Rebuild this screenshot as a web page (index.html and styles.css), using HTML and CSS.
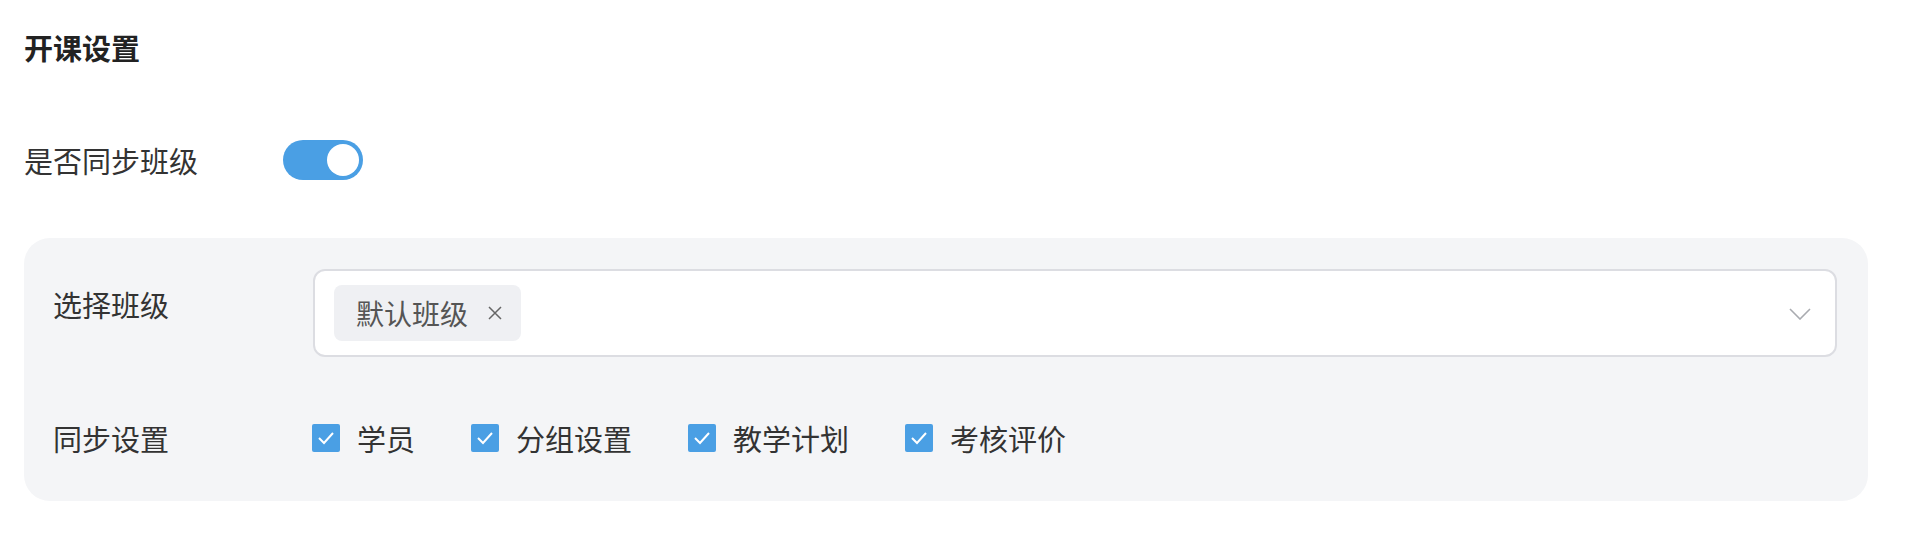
FILE: index.html
```html
<!DOCTYPE html>
<html>
<head>
  <title>开课设置</title>
  <meta charset="UTF-8">
  <link rel="stylesheet" href="styles.css">
</head>
<body>

  <h2 class="section-title">开课设置</h2>

  <div class="form-row switch-row">
    <label class="row-label">是否同步班级</label>
    <div class="switch is-on"><span class="switch-knob"></span></div>
  </div>

  <div class="sync-panel">
    <!-- wybór klasy -->
    <div class="panel-item">
      <label class="panel-label">选择班级</label>
      <div class="select-box">
        <span class="tag">默认班级
          <svg class="tag-close" width="14" height="14" viewBox="0 0 14 14"><path d="M1 1L13 13M13 1L1 13" stroke="#666" stroke-width="1.5" fill="none"/></svg>
        </span>
        <svg class="select-arrow" width="22" height="12" viewBox="0 0 22 12"><path d="M1 1L11 11L21 1" stroke="#A9ABB0" stroke-width="1.6" fill="none"/></svg>
      </div>
    </div>

    <!-- ustawienia synchronizacji -->
    <div class="panel-item check-item">
      <label class="panel-label">同步设置</label>
      <div class="check-group">
        <label class="check"><span class="check-box"><svg width="28" height="28" viewBox="0 0 28 28"><path d="M7 14L12 19L21 9" stroke="#fff" stroke-width="2" fill="none"/></svg></span>学员</label>
        <label class="check"><span class="check-box"><svg width="28" height="28" viewBox="0 0 28 28"><path d="M7 14L12 19L21 9" stroke="#fff" stroke-width="2" fill="none"/></svg></span>分组设置</label>
        <label class="check"><span class="check-box"><svg width="28" height="28" viewBox="0 0 28 28"><path d="M7 14L12 19L21 9" stroke="#fff" stroke-width="2" fill="none"/></svg></span>教学计划</label>
        <label class="check"><span class="check-box"><svg width="28" height="28" viewBox="0 0 28 28"><path d="M7 14L12 19L21 9" stroke="#fff" stroke-width="2" fill="none"/></svg></span>考核评价</label>
      </div>
    </div>
  </div>

</body>
</html>
```

FILE: styles.css
```css
body {
  margin: 0;
  padding: 27px 40px 0 24px;
  background-color: #fff;
  font-family: "Noto Sans CJK SC", sans-serif;
  font-size: 29px;
  color: #333;
}

.section-title {
  margin: 0;
  font-size: 29px;
  line-height: 40px;
  font-weight: 700;
  color: #222;
}

.form-row {
  display: flex;
  align-items: center;
}

.switch-row {
  margin-top: 73px;
  height: 40px;
}

.row-label {
  width: 259px;
  line-height: 40px;
}

/* przełącznik */
.switch {
  position: relative;
  width: 80px;
  height: 40px;
  border-radius: 20px;
  background-color: #bbb;
}

.switch.is-on {
  background-color: #4A9FE4;
}

.switch-knob {
  position: absolute;
  top: 4px;
  right: 4px;
  width: 32px;
  height: 32px;
  border-radius: 50%;
  background-color: #fff;
}

.sync-panel {
  margin-top: 58px;
  width: 1844px;
  box-sizing: border-box;
  padding: 31px 31px 43px 29px;
  background-color: #F4F5F7;
  border-radius: 26px;
}

.panel-item {
  display: flex;
  align-items: flex-start;
}

.panel-label {
  width: 260px;
  flex-shrink: 0;
  line-height: 40px;
  margin-top: 15px;
}

.select-box {
  flex: 1;
  display: flex;
  align-items: center;
  justify-content: space-between;
  height: 88px;
  box-sizing: border-box;
  padding: 0 24px 0 19px;
  background-color: #fff;
  border: 2px solid #DCDDE2;
  border-radius: 12px;
}

.tag {
  display: flex;
  align-items: center;
  height: 56px;
  padding: 0 19px 0 22px;
  background-color: #EFF0F3;
  border-radius: 8px;
  color: #555;
  font-size: 28px;
}

.tag-close {
  margin-left: 20px;
}

.select-arrow {
  margin-top: 2px;
}

.check-item {
  margin-top: 61px;
}

.check-item .panel-label {
  margin-top: 0;
}

.check-group {
  display: flex;
  align-items: center;
  height: 40px;
  margin-left: -1px;
}

.check {
  display: flex;
  align-items: center;
  margin-right: 56px;
  line-height: 40px;
  color: #333;
}

.check-box {
  display: block;
  width: 28px;
  height: 28px;
  margin-right: 17px;
  border-radius: 2px;
  background-color: #4A9FE4;
}

.check-box svg {
  display: block;
}
```
